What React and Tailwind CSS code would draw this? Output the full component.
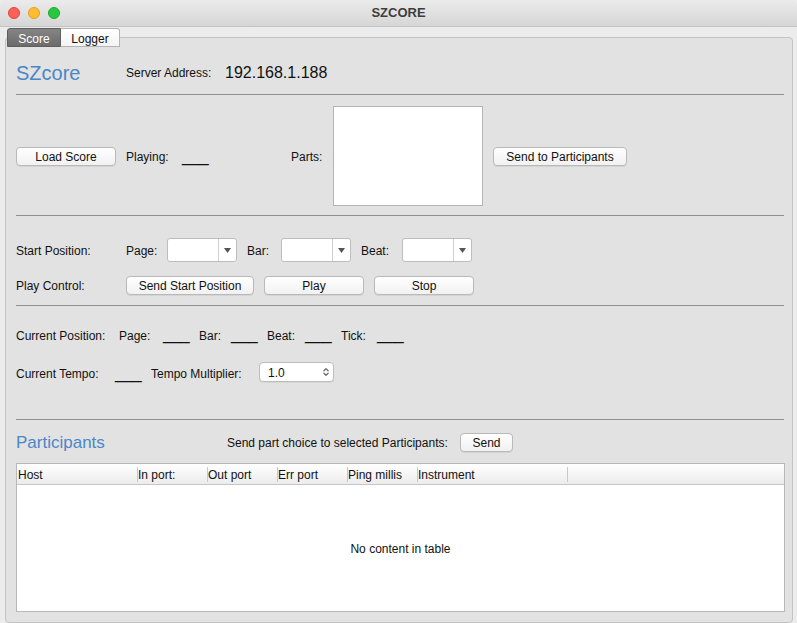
import { ChevronsUpDown } from 'lucide-react';

const FONT = { fontFamily: '"Liberation Sans", Arial, sans-serif' };

const Button = ({ children, className = '' }) => (
  <div
    className={`h-[19px] flex items-center justify-center pt-[2px] rounded-[4px] border border-[#b9b9b9] bg-gradient-to-b from-white to-[#f1f1f1] text-[12px] text-[#111] shadow-[0_1px_0_rgba(0,0,0,0.06)] ${className}`}
  >
    {children}
  </div>
);

const Combo = () => (
  <div className="w-[70px] h-[24px] flex rounded-[3px] border border-[#bdbdbd] bg-white">
    <div className="flex-1" />
    <div className="w-[18px] border-l border-[#cfcfcf] flex items-center justify-center">
      <svg width="7" height="5" viewBox="0 0 7 5">
        <path d="M0 0 L7 0 L3.5 5 Z" fill="#555" />
      </svg>
    </div>
  </div>
);

// empty value label, drawn as underscores like the app does
const Blank = ({ className = '' }) => (
  <span className={`text-[16px] leading-none ${className}`}>___</span>
);

const Divider = () => <div className="h-px bg-[#8f8f8f]" />;

const COLUMNS = [
  { name: 'Host', w: 'w-[120px]' },
  { name: 'In port:', w: 'w-[70px]' },
  { name: 'Out port', w: 'w-[70px]' },
  { name: 'Err port', w: 'w-[70px]' },
  { name: 'Ping millis', w: 'w-[70px]' },
  { name: 'Instrument', w: 'w-[150px]' },
];

export default function App() {
  return (
    <div className="w-[797px] h-[623px] bg-[#ececec] overflow-hidden text-[#111]" style={FONT}>
      {/* title bar */}
      <div className="h-[27px] relative flex items-center justify-center border-b border-[#c4c4c4] bg-gradient-to-b from-[#ebebeb] to-[#d6d6d6] rounded-t-[6px]">
        <div className="absolute left-[8px] top-[7px] flex gap-[8px]">
          <div className="w-[12px] h-[12px] rounded-full bg-[#fe5f57] border border-[#e0443e]" />
          <div className="w-[12px] h-[12px] rounded-full bg-[#febc2e] border border-[#dea123]" />
          <div className="w-[12px] h-[12px] rounded-full bg-[#28c840] border border-[#1aab29]" />
        </div>
        <span className="text-[13px] font-bold text-[#3d3d3d]">SZCORE</span>
      </div>

      {/* tabs */}
      <div className="relative z-10 flex pl-[7px] pt-[1px] h-[20px]">
        <div className="w-[54px] h-[19px] flex items-center justify-center pt-[2px] rounded-tl-[3px] border border-[#5e5e5e] bg-gradient-to-b from-[#858585] to-[#6b6b6b] text-[12px] text-white">
          Score
        </div>
        <div className="w-[59px] h-[19px] flex items-center justify-center pt-[2px] rounded-tr-[3px] border border-l-0 border-[#b3b3b3] bg-gradient-to-b from-white to-[#f4f4f4] text-[12px] text-[#111]">
          Logger
        </div>
      </div>

      {/* pane */}
      <div className="ml-[5px] mt-[-10px] w-[788px] h-[586px] rounded-[4px] border border-[#c3c3c3] bg-[#e2e2e2] pl-[10px] pr-[8px]">
        {/* header */}
        <div className="mt-[19px] h-[30px] flex items-center pt-[2px]">
          <span className="w-[110px] text-[20px] text-[#4a87c6]">SZcore</span>
          <span className="w-[99px] text-[12px]">Server Address:</span>
          <span className="text-[16px]">192.168.1.188</span>
        </div>
        <div className="mt-[7px]">
          <Divider />
        </div>

        {/* score loading */}
        <div className="pt-[11px] pb-[9px] flex items-center">
          <Button className="w-[100px]">Load Score</Button>
          <span className="ml-[10px] w-[56px] pt-[2px] text-[12px]">Playing:</span>
          <Blank className="w-[109px] mt-[2px]" />
          <span className="w-[42px] pt-[2px] text-[12px]">Parts:</span>
          <div className="w-[150px] h-[100px] bg-white border border-[#b4b4b4]" />
          <Button className="ml-[10px] w-[134px]">Send to Participants</Button>
        </div>
        <Divider />

        {/* start position / play control */}
        <div className="pt-[22px] pb-[10px] flex flex-col gap-[13px]">
          <div className="h-[24px] flex items-center text-[12px]">
            <span className="w-[110px] pt-[2px]">Start Position:</span>
            <span className="w-[41px] pt-[2px]">Page:</span>
            <Combo />
            <span className="ml-[10px] w-[34px] pt-[2px]">Bar:</span>
            <Combo />
            <span className="ml-[10px] w-[41px] pt-[2px]">Beat:</span>
            <Combo />
          </div>
          <div className="h-[20px] flex items-center text-[12px]">
            <span className="w-[110px] pt-[2px]">Play Control:</span>
            <Button className="w-[128px]">Send Start Position</Button>
            <Button className="ml-[10px] w-[100px]">Play</Button>
            <Button className="ml-[10px] w-[100px]">Stop</Button>
          </div>
        </div>
        <Divider />

        {/* current position */}
        <div className="h-[113px] pt-[17px]">
          <div className="h-[22px] flex items-center text-[12px]">
            <span className="w-[103px] pt-[3px]">Current Position:</span>
            <span className="w-[44px] pt-[3px]">Page:</span>
            <Blank className="w-[36px] mt-[2px]" />
            <span className="w-[32px] pt-[3px]">Bar:</span>
            <Blank className="w-[36px] mt-[2px]" />
            <span className="w-[38px] pt-[3px]">Beat:</span>
            <Blank className="w-[36px] mt-[2px]" />
            <span className="w-[36px] pt-[3px]">Tick:</span>
            <Blank className="w-[36px] mt-[2px]" />
          </div>
          <div className="mt-[17px] h-[20px] flex items-center text-[12px]">
            <span className="w-[99px] pt-[3px]">Current Tempo:</span>
            <Blank className="w-[36px] mt-[4px]" />
            <span className="w-[108px] pt-[3px]">Tempo Multiplier:</span>
            <div className="w-[75px] h-[20px] flex items-center justify-between rounded-[4px] border border-[#bdbdbd] bg-white pl-[8px] pr-[2px] shadow-[0_1px_0_rgba(0,0,0,0.05)]">
              <span className="pt-[2px]">1.0</span>
              <ChevronsUpDown className="w-[10px] h-[10px] text-[#666]" strokeWidth={3} />
            </div>
          </div>
        </div>
        <Divider />

        {/* participants */}
        <div className="mt-[12px] h-[20px] flex items-center">
          <span className="w-[211px] pt-[2px] text-[17px] text-[#4a87c6]">Participants</span>
          <span className="w-[233px] pt-[2px] text-[12px]">Send part choice to selected Participants:</span>
          <Button className="w-[53px]">Send</Button>
        </div>

        <div className="mt-[11px] w-[769px] h-[149px] flex flex-col border border-[#b8b8b8] bg-white">
          <div className="h-[21px] flex items-center border-b border-[#c6c6c6] bg-gradient-to-b from-white to-[#ececec] text-[12px]">
            {COLUMNS.map((col, i) => (
              <div
                key={col.name}
                className={`${col.w} h-[15px] flex items-center pt-[2px] ${i > 0 ? 'border-l border-[#c8c8c8]' : 'pl-[1px]'}`}
              >
                {col.name}
              </div>
            ))}
            <div className="flex-1 h-[15px] border-l border-[#c8c8c8]" />
          </div>
          <div className="flex-1 flex items-center justify-center pt-[2px] text-[12px]">No content in table</div>
        </div>
      </div>
    </div>
  );
}
